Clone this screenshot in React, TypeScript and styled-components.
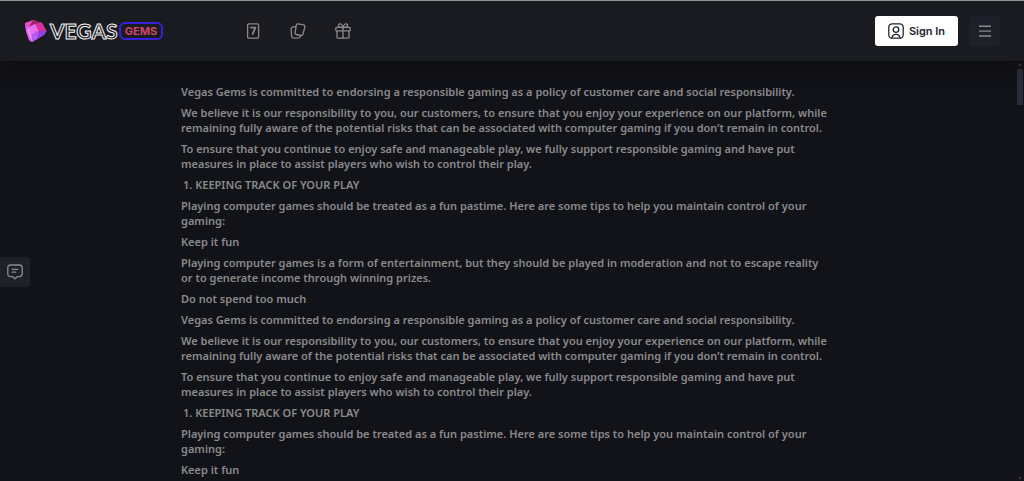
import React from "react";
import styled, { createGlobalStyle } from "styled-components";

const GlobalStyle = createGlobalStyle`
  * { box-sizing: border-box; }
  html, body, #root { height: 100%; margin: 0; }
  body {
    background: #121318;
    color: #8a8a8c;
    font-family: "Noto Sans", "Open Sans", sans-serif;
    font-size: 11px;
    font-weight: 600;
    line-height: 15px;
    overflow: hidden;
  }
`;

const Page = styled.div`
  height: 100%;
  display: flex;
  flex-direction: column;
`;

const Header = styled.header`
  flex: none;
  height: 61px;
  display: flex;
  align-items: center;
  padding: 0 24px;
  border-top: 1px solid #8f9294;
  background: #1a1b20;
  box-shadow: 0 4px 20px rgba(0, 0, 0, 0.4);
  z-index: 1;
`;

const Logo = styled.a`
  display: flex;
  align-items: center;
  text-decoration: none;
`;

const Wordmark = styled.span`
  width: 69px;
  margin-left: 3px;
  color: #1a1b20;
  font: 700 21px/24px Lato, sans-serif;
  -webkit-text-stroke: 1px #f4f4f6;
`;

const Badge = styled.span`
  width: 44px;
  height: 18px;
  border: 2px solid #3720dc;
  border-radius: 6px;
  color: #cf4568;
  font: 700 11px/14px Inter, sans-serif;
  text-align: center;
`;

const Nav = styled.nav`
  display: flex;
  gap: 29px;
  margin-left: 82px;
`;

const NavLink = styled.a`
  display: flex;
  color: #8a8a8a;
`;

const Actions = styled.div`
  display: flex;
  gap: 12px;
  margin-left: auto;
`;

const SignIn = styled.button`
  display: flex;
  align-items: center;
  justify-content: center;
  gap: 5px;
  width: 83px;
  height: 30px;
  padding: 0;
  border: 0;
  border-radius: 3px;
  background: #fff;
  color: #22242d;
  font: 600 11px/15px Inter, sans-serif;
`;

const IconButton = styled.button`
  display: flex;
  align-items: center;
  justify-content: center;
  width: 30px;
  height: 30px;
  padding: 0;
  border: 0;
  border-radius: 3px;
  background: #1f212a;
  color: #8a8a8a;
`;

const ChatButton = styled(IconButton)`
  position: fixed;
  left: 0;
  top: calc(50% + 16px);
  border-radius: 0 3px 3px 0;
`;

const Body = styled.div`
  flex: 1;
  min-height: 0;
  display: flex;
`;

const Scroller = styled.main`
  flex: 1;
  overflow-y: auto;
  scrollbar-width: none;
`;

const ScrollTrack = styled.div`
  flex: none;
  width: 6px;
  margin-right: 1px;
  display: flex;
  flex-direction: column;
  align-items: center;
  color: #34353b;
`;

const ScrollThumb = styled.div`
  width: 6px;
  height: 36px;
  margin: 2px 0 auto;
  background: #2a2c38;
`;

const Article = styled.article`
  max-width: 655px;
  margin: 0 auto;
  padding: 23px 6px 0 0;
`;

const Paragraph = styled.p`
  margin: 0 0 6px;
`;

const Heading = styled.h2`
  margin: 0 0 6px;
  padding-left: 2px;
  font-size: 11px;
  font-weight: 600;
  line-height: 15px;
`;

const Gem = () => (
  <svg width="23" height="24" viewBox="0 0 23 24" aria-hidden="true">
    <defs>
      <linearGradient id="gem" x1="0" y1="0" x2="1" y2="1">
        <stop offset="0" stopColor="#ff4fae" />
        <stop offset="0.5" stopColor="#c948ec" />
        <stop offset="1" stopColor="#7d3fe0" />
      </linearGradient>
    </defs>
    <path d="M1 4 9 1 18 4 22.500 12 20 16 8 23 5 21 2 12Z" fill="url(#gem)" />
    <path d="m9 1 9 3-7 1-6 3Z" fill="#9c2466" />
    <path d="m11 5 7-1 4.500 8-8 0Z" fill="#d6309c" />
    <path d="m5 8 6-3 3.500 7-7 4Z" fill="#e86fee" />
    <path d="M1 4 5 8l2.500 8L8 23l-3-2L2 12Z" fill="#d85bea" />
    <path d="m7.500 16 7-4 8 0L20 16 8 23Z" fill="#9a3fe2" />
    <path d="m7.500 16 7-4L13 20 8 23Z" fill="#b65cf0" />
    <path d="m5 8 2.500 8L8 23 3 12Z" fill="#ee8cf6" />
  </svg>
);

const stroke = {
  fill: "none",
  stroke: "currentColor",
  strokeWidth: 1.3,
  strokeLinejoin: "round" as const,
  strokeLinecap: "round" as const,
};

const SlotIcon = () => (
  <svg width="16" height="16" viewBox="0 0 16 16" {...stroke}>
    <rect x="2.600" y="0.800" width="11" height="14.400" rx="1.200" />
    <path d="M6 4.700h4.400L7.600 11" strokeWidth="1.800" />
  </svg>
);

const CardsIcon = () => (
  <svg width="16" height="16" viewBox="0 0 16 16" {...stroke}>
    <path d="M8 .9l5.600 1q1.600.4 1.400 1.900l-2.200 7.700q-.4 1.200-1.700 1L6.200 11.500q-1.300-.4-1.100-1.700L6.300 2.200Q6.600.7 8 .9Z" />
    <path d="m5.600 3.600-3.200.6Q.9 4.600 1 6l.7 7.600q.2 1.500 1.700 1.500l5.500-.3q1.200-.2 1.700-2" />
  </svg>
);

const GiftIcon = () => (
  <svg width="16" height="16" viewBox="0 0 16 16" {...stroke}>
    <rect x="0.800" y="4.400" width="14.400" height="3.400" rx="0.800" />
    <path d="M2 7.800v6.400q0 1 1 1h10q1 0 1-1V7.800M8 4.400v10.800" />
    <path d="M8 4.400C5.800 4.700 3 4 3.500 2 4-.1 7.500.6 8 4.400ZM8 4.400C10.200 4.700 13 4 12.500 2 12-.1 8.500.6 8 4.400Z" />
  </svg>
);

const UserIcon = () => (
  <svg width="16" height="16" viewBox="0 0 16 16" {...stroke}>
    <rect x="0.800" y="0.800" width="14.400" height="14.400" rx="3.500" />
    <circle cx="8" cy="6.600" r="2.800" />
    <path d="M4 14.800c.2-2.200 1.500-3.500 4-3.500s3.800 1.300 4 3.500" />
  </svg>
);

const MenuIcon = () => (
  <svg width="12" height="12" viewBox="0 0 12 12" stroke="currentColor" strokeWidth="1.400">
    <path d="M0 1.300h12M0 6.100h12M0 11h12" />
  </svg>
);

const ChatIcon = () => (
  <svg width="16" height="16" viewBox="0 0 16 16" {...stroke}>
    <path d="M3.600 1h8.800q2.800 0 2.800 2.800v6q0 2.800-2.800 2.800h-1.800L8 14.800l-2.600-2.200H3.600Q.8 12.600.8 9.800v-6Q.8 1 3.600 1ZM5.200 5.300h5.600M5.200 8.200h3.400" />
  </svg>
);

const ScrollArrow = ({ down = false }: { down?: boolean }) => (
  <svg width="6" height="6" viewBox="0 0 6 6" fill="currentColor" aria-hidden="true">
    <path d={down ? "M1 2h4L3 5Z" : "M1 5h4L3 2Z"} />
  </svg>
);

const Introduction = () => (
  <>
    <Paragraph>
      Vegas Gems is committed to endorsing a responsible gaming as a policy of customer care and social responsibility.
    </Paragraph>
    <Paragraph>
      We believe it is our responsibility to you, our customers, to ensure that you enjoy your experience on our
      platform, while remaining fully aware of the potential risks that can be associated with computer gaming if you
      don’t remain in control.
    </Paragraph>
    <Paragraph>
      To ensure that you continue to enjoy safe and manageable play, we fully support responsible gaming and have put
      measures in place to assist players who wish to control their play.
    </Paragraph>
    <Heading>1. KEEPING TRACK OF YOUR PLAY</Heading>
    <Paragraph>
      Playing computer games should be treated as a fun pastime. Here are some tips to help you maintain control of
      your gaming:
    </Paragraph>
    <Paragraph>Keep it fun</Paragraph>
  </>
);

export default function App() {
  return (
    <Page>
      <GlobalStyle />
      <Header>
        <Logo href="#home">
          <Gem />
          <Wordmark>VEGAS</Wordmark>
          <Badge>GEMS</Badge>
        </Logo>
        <Nav>
          <NavLink href="#slots" aria-label="Slots"><SlotIcon /></NavLink>
          <NavLink href="#cards" aria-label="Table games"><CardsIcon /></NavLink>
          <NavLink href="#gifts" aria-label="Promotions"><GiftIcon /></NavLink>
        </Nav>
        <Actions>
          <SignIn type="button"><UserIcon />Sign In</SignIn>
          <IconButton type="button" aria-label="Menu"><MenuIcon /></IconButton>
        </Actions>
      </Header>
      <Body>
        <Scroller>
          <Article>
            <Introduction />
            <Paragraph>
              Playing computer games is a form of entertainment, but they should be played in moderation and not to
              escape reality or to generate income through winning prizes.
            </Paragraph>
            <Paragraph>Do not spend too much</Paragraph>
            <Introduction />
          </Article>
        </Scroller>
        <ScrollTrack>
          <ScrollArrow />
          <ScrollThumb />
          <ScrollArrow down />
        </ScrollTrack>
      </Body>
      <ChatButton type="button" aria-label="Chat"><ChatIcon /></ChatButton>
    </Page>
  );
}
